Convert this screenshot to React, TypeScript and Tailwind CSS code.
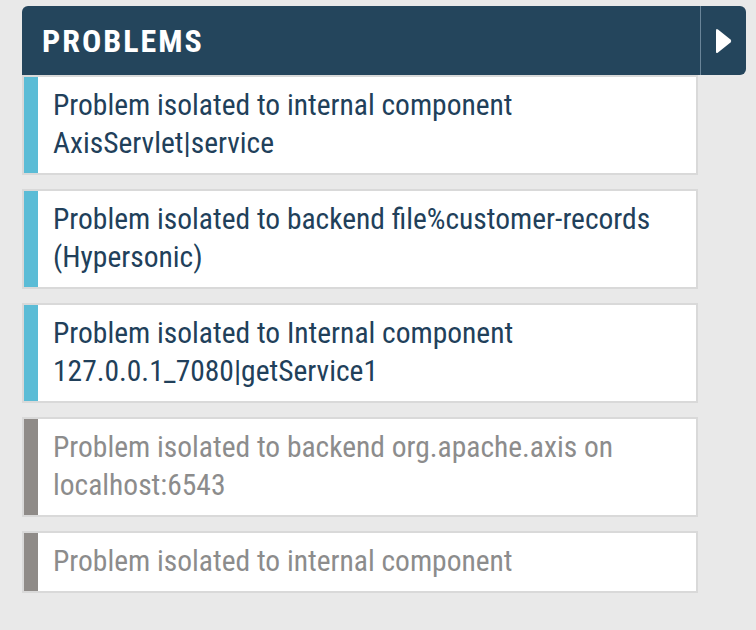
import React from 'react';

interface Problem {
  id: number;
  text: string;
  active: boolean;
}

const problems: Problem[] = [
  { id: 1, text: "Problem isolated to internal component AxisServlet|service", active: true },
  { id: 2, text: "Problem isolated to backend file%customer-records (Hypersonic)", active: true },
  { id: 3, text: "Problem isolated to Internal component 127.0.0.1_7080|getService1", active: true },
  { id: 4, text: "Problem isolated to backend org.apache.axis on localhost:6543", active: false },
  { id: 5, text: "Problem isolated to internal component", active: false },
];

const App = () => {
  return (
    <div className="min-h-[630px] w-[756px] bg-[#e9e9e9] pt-[6px] pl-[22px] font-['Roboto',sans-serif] [font-stretch:75%]">
      {/* Header */}
      <div className="flex h-[69px] w-[724px] rounded-[6px] rounded-bl-none bg-[#24455c]">
        <div className="flex w-[678px] items-center pl-[20px]">
          <h2 className="text-[32px] font-bold uppercase tracking-[2px] text-white">Problems</h2>
        </div>
        <div className="w-px bg-[#6a8599]" />
        <button className="flex flex-1 items-center justify-center">
          <svg width="18" height="28" viewBox="0 0 18 28">
            <path d="M3 2.5 L15.5 12.6 Q17 14 15.5 15.4 L3 25.5 Q1 27 1 24.5 L1 3.5 Q1 1 3 2.5 Z" fill="#ffffff" />
          </svg>
        </button>
      </div>

      {/* Problem list */}
      <div className="flex w-[676px] flex-col gap-[14px]">
        {problems.map((p) => (
          <div key={p.id} className="flex border-2 border-[#d9d9d9] bg-white">
            <div className={`w-[14px] shrink-0 ${p.active ? 'bg-[#5bbcd6]' : 'bg-[#8f8b88]'}`} />
            <p className={`pt-[9px] pb-[11px] pl-[15px] pr-[20px] text-[29.5px] leading-[38px] ${p.active ? 'text-[#21405a]' : 'text-[#8c8c8c]'}`}>
              {p.text}
            </p>
          </div>
        ))}
      </div>
    </div>
  );
};

export default App;
